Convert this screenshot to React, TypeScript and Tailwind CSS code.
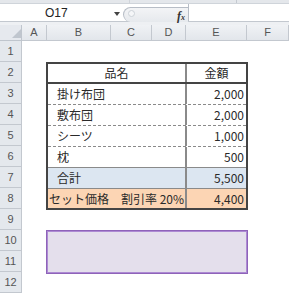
import React from "react";

const font = { fontFamily: '"Noto Sans CJK JP", "Noto Sans", sans-serif' };

export default function App() {
  const cols = ["A", "B", "C", "D", "E", "F"];
  const rows = Array.from({ length: 12 }, (_, i) => i + 1);
  return (
    <div
      className="w-[289px] h-[300px] overflow-hidden bg-white text-[#222]"
      style={font}
    >
      {/* top strip */}
      <div className="h-[4px] bg-[#e4e7eb] border-b border-[#cfd4da] flex">
        <div className="w-[130px] border-r border-[#d0d4da]" />
        <div className="w-[107px] border-r border-[#c4c9d0]" />
      </div>
      {/* formula bar */}
      <div className="h-[18px] flex border-b border-[#c3c8cf] bg-white">
        <div className="w-[123px] relative flex items-center">
          <span
            className="absolute left-[45px] top-[1px] text-[12px] leading-[16px]"
            style={{ fontFamily: '"Liberation Sans", sans-serif' }}
          >
            O17
          </span>
          <span className="absolute left-[114px] top-[8px] w-0 h-0 border-l-[3px] border-r-[3px] border-t-[4px] border-l-transparent border-r-transparent border-t-[#444]" />
        </div>
        <div className="w-[65px] mt-[3px] h-[15px] rounded-l-full border border-r-0 border-b-0 border-[#b7bdc6] bg-gradient-to-b from-[#f3f4f6] to-[#e6e9ed] relative flex items-center">
          <span className="absolute left-[4px] top-[2px] w-[7px] h-[7px] rounded-full border border-[#cdd2d8] bg-[#f5f6f8]" />
          <span
            className="absolute left-[53px] top-[-1px] text-[12px] italic font-bold text-[#333]"
            style={{ fontFamily: '"Liberation Serif", serif' }}
          >
            f<span className="text-[8px]">x</span>
          </span>
        </div>
        <div className="flex-1 border-l border-[#b7bdc6] bg-white" />
      </div>
      {/* gap */}
      <div className="h-[3px] bg-[#eef0f3]" />
      {/* sheet grid */}
      <div className="grid grid-cols-[22px_25px_64px_41px_34px_61px_42px] grid-rows-[16px_repeat(12,21px)]">
        {/* corner */}
        <div className="bg-[#e6e9ee] border-r border-b border-[#bfc5cd] relative">
          <svg className="absolute left-[12px] top-[4px]" width="9" height="9">
            <polygon points="9,0 9,9 0,9" fill="#c0c6ce" />
          </svg>
        </div>
        {cols.map((c) => (
          <div
            key={c}
            className="bg-gradient-to-b from-[#f0f2f5] to-[#e2e6eb] border-r border-b border-[#c3c8cf] flex items-center justify-center text-[11px] text-[#555]"
            style={{ fontFamily: '"Liberation Sans", sans-serif' }}
          >
            {c}
          </div>
        ))}
        {rows.map((r) => (
          <div
            key={r}
            className="col-start-1 bg-[#e4e8ed] border-r border-b border-[#c3c8cf] flex items-center justify-center text-[11px] text-[#555]"
            style={{ gridRowStart: r + 1, fontFamily: '"Liberation Sans", sans-serif' }}
          >
            {r}
          </div>
        ))}
        {/* table */}
        <div className="col-start-3 col-end-7 row-start-3 row-end-10 ml-[-1px] mr-[-1px] mb-[-1px] border-2 border-[#444] flex flex-col text-[12px] leading-none text-[#2a2a2a]">
          <div className="h-[20px] grid grid-cols-[1fr_61px] border-b-2 border-[#444]">
            <div className="flex items-center justify-center">品名</div>
            <div className="flex items-center justify-center border-l-2 border-[#8a8a8a]">金額</div>
          </div>
          {[
            ["掛け布団", "2,000"],
            ["敷布団", "2,000"],
            ["シーツ", "1,000"],
            ["枕", "500"],
          ].map(([n, v], i) => (
            <div
              key={n}
              className={`h-[21px] grid grid-cols-[1fr_61px] border-b border-[#8a8a8a] ${
                i < 3 ? "border-dashed" : "border-solid"
              }`}
            >
              <div className="flex items-center pl-[9px]">{n}</div>
              <div className="flex items-center justify-end pr-[2px] border-l-2 border-[#8a8a8a] border-solid">{v}</div>
            </div>
          ))}
          <div className="h-[21px] grid grid-cols-[1fr_61px] border-b border-[#8a8a8a] bg-[#dce6f1]">
            <div className="flex items-center pl-[9px]">合計</div>
            <div className="flex items-center justify-end pr-[2px] border-l-2 border-[#8a8a8a]">5,500</div>
          </div>
          <div className="flex-1 grid grid-cols-[1fr_61px] bg-[#fcd5b4]">
            <div className="flex items-center pl-[1px] whitespace-pre">セット価格　割引率 20%</div>
            <div className="flex items-center justify-end pr-[2px] border-l-2 border-[#8a8a8a]">4,400</div>
          </div>
        </div>
        {/* purple box */}
        <div className="col-start-3 col-end-7 row-start-11 row-end-13 ml-[-1px] mr-[-1px] mb-[-2px] border border-[#8e63b9] bg-[#e4dfec]">
          <div className="h-full border border-[#ad8ad3]" />
        </div>
      </div>
    </div>
  );
}
